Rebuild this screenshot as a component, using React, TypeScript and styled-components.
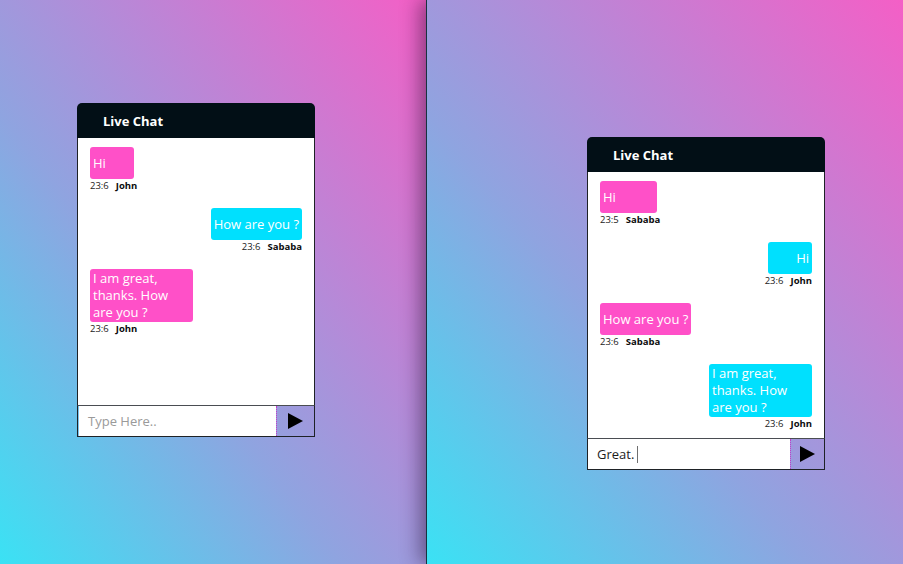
import React from "react";
import styled, { createGlobalStyle } from "styled-components";

const GlobalStyle = createGlobalStyle`
  html, body { margin: 0; padding: 0; }
  body {
    width: 903px;
    height: 564px;
    overflow: hidden;
    font-family: "Open Sans", "Noto Sans", "Liberation Sans", sans-serif;
  }
  * { box-sizing: border-box; }
`;

const Stage = styled.div`
  display: flex;
  width: 903px;
  height: 564px;
`;

const Pane = styled.section<{ $w?: number; $padTop: number; $padLeft: number; $raised?: boolean }>`
  position: relative;
  ${(p) => (p.$w ? `width: ${p.$w}px; flex: none;` : "flex: 1;")}
  height: 100%;
  padding: ${(p) => p.$padTop}px 0 0 ${(p) => p.$padLeft}px;
  background: linear-gradient(to top right, #3ae2f4 0%, #8fa4e0 40%, #b58ad8 62%, #f45fc6 100%);
  ${(p) =>
    p.$raised
      ? `border-left: 1px solid #17333f; box-shadow: -6px 0 18px rgba(20, 10, 40, 0.45); z-index: 1;`
      : ""}
`;

const ChatBox = styled.div`
  width: 238px;
  display: flex;
  flex-direction: column;
`;

const Header = styled.div`
  height: 35px;
  display: flex;
  align-items: center;
  padding-left: 26px;
  background: #020f16;
  border-radius: 5px 5px 0 0;
  color: #ffffff;
  font-size: 13px;
  font-weight: 700;
`;

const Body = styled.div<{ $h: number }>`
  height: ${(p) => p.$h}px;
  background: #ffffff;
  border-left: 1px solid #1e2226;
  border-right: 1px solid #1e2226;
  padding: 9px 12px;
  display: flex;
  flex-direction: column;
  gap: 16px;
`;

const Message = styled.div<{ $mine: boolean }>`
  display: flex;
  flex-direction: column;
  align-items: ${(p) => (p.$mine ? "flex-end" : "flex-start")};
`;

const Bubble = styled.div<{ $mine: boolean; $minW: number }>`
  display: flex;
  align-items: center;
  justify-content: ${(p) => (p.$mine ? "flex-end" : "flex-start")};
  min-height: 32px;
  min-width: ${(p) => p.$minW}px;
  max-width: 103px;
  padding: 1px 3px;
  border-radius: 3px;
  background: ${(p) => (p.$mine ? "#00e0fe" : "#ff50c8")};
  color: #ffffff;
  font-size: 13px;
  line-height: 17px;
`;

const Meta = styled.div`
  display: flex;
  gap: 7px;
  padding-top: 1px;
  font-size: 9.5px;
  line-height: 12px;
  color: #1a1a1a;
`;

const Author = styled.span`
  font-weight: 700;
  color: #0c0c0c;
`;

const InputRow = styled.div`
  height: 32px;
  display: flex;
  border: 1px solid #1e2226;
  border-top-color: #4a4d52;
`;

const Field = styled.div<{ $accent?: boolean }>`
  flex: 1;
  display: flex;
  align-items: center;
  padding-left: 9px;
  background: #ffffff;
  ${(p) => (p.$accent ? "border-left: 1px solid #7cc4ec;" : "")}
  font-size: 13px;
  color: #1d1d1d;
`;

const Placeholder = styled.span`
  color: #9a9a9a;
`;

const Caret = styled.span`
  display: inline-block;
  width: 1px;
  height: 17px;
  margin-left: 3px;
  background: #6f6f6f;
`;

const SendButton = styled.button<{ $w: number }>`
  width: ${(p) => p.$w}px;
  flex: none;
  display: flex;
  align-items: center;
  justify-content: center;
  padding: 0;
  margin: 0;
  border: none;
  border-left: 1px dotted #c23cc8;
  background: transparent;
  cursor: pointer;
`;

type Msg = { text: string; time: string; author: string; mine: boolean; minW: number };

const leftMsgs: Msg[] = [
  { text: "Hi", time: "23:6", author: "John", mine: false, minW: 44 },
  { text: "How are you ?", time: "23:6", author: "Sababa", mine: true, minW: 44 },
  { text: "I am great, thanks. How are you ?", time: "23:6", author: "John", mine: false, minW: 44 },
];

const rightMsgs: Msg[] = [
  { text: "Hi", time: "23:5", author: "Sababa", mine: false, minW: 57 },
  { text: "Hi", time: "23:6", author: "John", mine: true, minW: 44 },
  { text: "How are you ?", time: "23:6", author: "Sababa", mine: false, minW: 44 },
  { text: "I am great, thanks. How are you ?", time: "23:6", author: "John", mine: true, minW: 44 },
];

const Triangle = () => (
  <svg width="15" height="16" viewBox="0 0 15 16" aria-hidden="true">
    <polygon points="0,0 15,8 0,16" fill="#000000" />
  </svg>
);

function Chat({
  messages,
  bodyH,
  sendW,
  value,
  accent,
}: {
  messages: Msg[];
  bodyH: number;
  sendW: number;
  value?: string;
  accent?: boolean;
}) {
  return (
    <ChatBox>
      <Header>Live Chat</Header>
      <Body $h={bodyH}>
        {messages.map((m, i) => (
          <Message key={i} $mine={m.mine}>
            <Bubble $mine={m.mine} $minW={m.minW}>
              <span>{m.text}</span>
            </Bubble>
            <Meta>
              <span>{m.time}</span>
              <Author>{m.author}</Author>
            </Meta>
          </Message>
        ))}
      </Body>
      <InputRow>
        <Field $accent={accent}>
          {value ? (
            <>
              <span>{value}</span>
              <Caret />
            </>
          ) : (
            <Placeholder>Type Here..</Placeholder>
          )}
        </Field>
        <SendButton $w={sendW} aria-label="Send">
          <Triangle />
        </SendButton>
      </InputRow>
    </ChatBox>
  );
}

export default function App() {
  return (
    <>
      <GlobalStyle />
      <Stage>
        <Pane $w={426} $padTop={103} $padLeft={77}>
          <Chat messages={leftMsgs} bodyH={267} sendW={38} accent />
        </Pane>
        <Pane $padTop={137} $padLeft={160} $raised>
          <Chat messages={rightMsgs} bodyH={266} sendW={34} value="Great." />
        </Pane>
      </Stage>
    </>
  );
}
